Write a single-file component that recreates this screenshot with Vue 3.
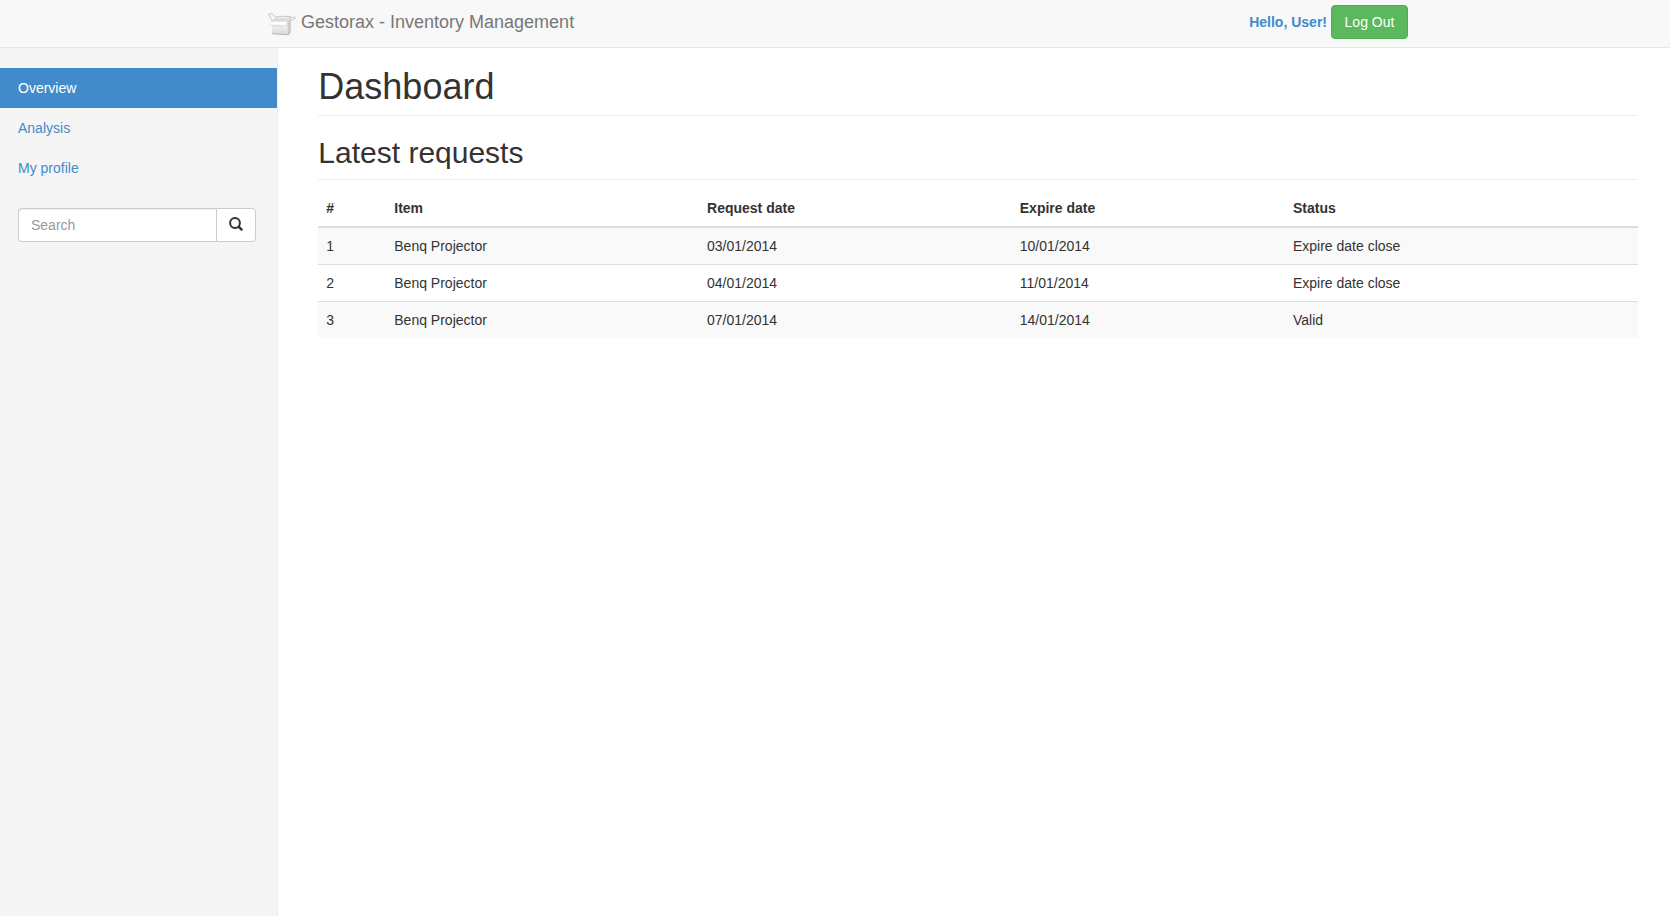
<script setup>
import { ref } from 'vue'

const query = ref('')
const links = [
  { label: 'Overview', active: true },
  { label: 'Analysis', active: false },
  { label: 'My profile', active: false },
]
const requests = [
  { id: 1, item: 'Benq Projector', requested: '03/01/2014', expires: '10/01/2014', status: 'Expire date close' },
  { id: 2, item: 'Benq Projector', requested: '04/01/2014', expires: '11/01/2014', status: 'Expire date close' },
  { id: 3, item: 'Benq Projector', requested: '07/01/2014', expires: '14/01/2014', status: 'Valid' },
]
</script>

<template>
  <div class="page">
    <header class="navbar">
      <div class="navbar-inner">
        <a class="brand" href="#">
          <svg class="logo" viewBox="0 0 28 23" width="28" height="23" aria-hidden="true">
            <defs>
              <linearGradient id="box-front" x1="0" y1="0" x2="0" y2="1">
                <stop offset="0" stop-color="#cfcfcf" />
                <stop offset="0.45" stop-color="#ececec" />
                <stop offset="1" stop-color="#d6d6d6" />
              </linearGradient>
            </defs>
            <path d="M8 4 L12 3.2 L22.6 3.6 L23 7 L19 9 L4 8.5 Z" fill="#ececec" stroke="#c0c0c0" stroke-width="0.8" />
            <path d="M9 5.6 L21.4 5.4 L19.4 8.2 L6.5 8 Z" fill="#dadada" />
            <path d="M0.6 1 L4.4 0.6 L8.2 4.8 L4.2 8 Z" fill="#f6f6f6" stroke="#bdbdbd" stroke-width="0.8" />
            <path d="M19.2 8.5 L23 6.4 L22.8 18.4 L20.6 21.6 L19.4 21.6 Z" fill="#cccccc" />
            <path d="M4 9 L19.4 9 L19.8 21.6 L3.8 20.6 Z" fill="url(#box-front)" />
            <path d="M3.8 20.7 L20.4 21.8 L22.8 18.6" fill="none" stroke="#adadad" stroke-width="0.9" />
            <path d="M3.6 8.3 L19.6 8.4 L18.4 12.4 L1.4 11.8 Z" fill="#ffffff" stroke="#d6d6d6" stroke-width="0.5" />
            <path d="M21.6 5.4 L26.8 3.9 L27.4 5.6 L23.2 7.4 Z" fill="#f8f8f8" stroke="#bdbdbd" stroke-width="0.8" />
          </svg>
          <span>Gestorax - Inventory Management</span>
        </a>
        <div class="account">
          <a class="hello" href="#">Hello, User!</a>
          <button class="logout" type="button">Log Out</button>
        </div>
      </div>
    </header>

    <div class="body">
      <aside class="sidebar">
        <nav class="menu">
          <a v-for="link in links" :key="link.label" href="#" :class="{ active: link.active }">{{ link.label }}</a>
        </nav>
        <form class="search" @submit.prevent>
          <input v-model="query" type="text" placeholder="Search" aria-label="Search" />
          <button type="submit" aria-label="Submit search">
            <svg viewBox="0 0 14 14" width="14" height="14" aria-hidden="true">
              <circle cx="6" cy="6" r="4.9" fill="none" stroke="#333" stroke-width="2" />
              <path d="M9.4 9.4 L13.2 13.2" fill="none" stroke="#333" stroke-width="2.6" />
            </svg>
          </button>
        </form>
      </aside>

      <main class="main">
        <h1>Dashboard</h1>
        <h2>Latest requests</h2>
        <table>
          <colgroup>
            <col class="col-id" />
            <col class="col-item" />
            <col class="col-requested" />
            <col class="col-expires" />
            <col />
          </colgroup>
          <thead>
            <tr>
              <th scope="col">#</th>
              <th scope="col">Item</th>
              <th scope="col">Request date</th>
              <th scope="col">Expire date</th>
              <th scope="col">Status</th>
            </tr>
          </thead>
          <tbody>
            <tr v-for="row in requests" :key="row.id">
              <td>{{ row.id }}</td>
              <td>{{ row.item }}</td>
              <td>{{ row.requested }}</td>
              <td>{{ row.expires }}</td>
              <td>{{ row.status }}</td>
            </tr>
          </tbody>
        </table>
      </main>
    </div>
  </div>
</template>

<style>
body {
  margin: 0;
  background: #fff;
}
</style>

<style scoped>
.page,
.page * {
  box-sizing: border-box;
}
.page {
  display: flex;
  flex-direction: column;
  min-height: 100vh;
  font-family: "Liberation Sans", Arial, Helvetica, sans-serif;
  font-size: 14px;
  line-height: 20px;
  color: #333;
}
a {
  color: #428bca;
  text-decoration: none;
}
.navbar {
  background: #f8f8f8;
  border-bottom: 1px solid #e7e7e7;
}
.navbar-inner {
  display: flex;
  align-items: flex-start;
  justify-content: space-between;
  max-width: 1170px;
  margin: 0 auto;
  padding: 5px 12px 8px 18px;
}
.brand {
  display: flex;
  align-items: center;
  gap: 5px;
  height: 34px;
  color: #777;
  font-size: 18px;
}
.logo {
  margin-top: 4px;
}
.account {
  display: flex;
  align-items: center;
  gap: 4px;
}
.hello {
  font-weight: bold;
}
.logout {
  min-width: 77px;
  height: 34px;
  padding: 0 12px;
  border: 1px solid #4cae4c;
  border-radius: 4px;
  background: #5cb85c;
  color: #fff;
  font: inherit;
}
.body {
  display: flex;
  flex: 1;
}
.sidebar {
  flex: none;
  width: 16.6667%;
  padding-top: 20px;
  background: #f5f5f5;
  border-right: 1px solid #eee;
}
.menu {
  display: flex;
  flex-direction: column;
}
.menu a {
  padding: 10px 18px;
}
.menu .active {
  background: #428bca;
  color: #fff;
}
.search {
  display: flex;
  margin: 20px 21px 0 18px;
}
.search input {
  flex: 1;
  min-width: 0;
  height: 34px;
  padding: 6px 12px;
  border: 1px solid #ccc;
  border-right: 0;
  border-radius: 4px 0 0 4px;
  background: #fff;
  box-shadow: inset 0 1px 1px rgba(0, 0, 0, 0.075);
  color: #555;
  font: inherit;
}
.search input::placeholder {
  color: #999;
  opacity: 1;
}
.search button {
  display: flex;
  flex: none;
  align-items: center;
  justify-content: center;
  width: 40px;
  height: 34px;
  padding: 0 0 2px;
  border: 1px solid #ccc;
  border-radius: 0 4px 4px 0;
  background: #fff;
}
.main {
  flex: 1;
  min-width: 0;
  padding: 19px 32px 20px 40px;
}
h1,
h2 {
  margin: 0;
  border-bottom: 1px solid #eee;
  font-weight: normal;
}
h1 {
  margin-bottom: 20px;
  padding-bottom: 8px;
  font-size: 36px;
  line-height: 40px;
}
h2 {
  margin-bottom: 10px;
  padding-bottom: 9px;
  font-size: 30px;
  line-height: 34px;
}
table {
  width: 100%;
  table-layout: fixed;
  border-collapse: separate;
  border-spacing: 0;
}
.col-id {
  width: 5.15%;
}
.col-item,
.col-requested {
  width: 23.7%;
}
.col-expires {
  width: 20.7%;
}
th,
td {
  padding: 8px;
  text-align: left;
}
th {
  border-bottom: 2px solid #ddd;
}
tbody tr:nth-child(odd) {
  background: #f9f9f9;
}
tbody tr + tr td {
  border-top: 1px solid #ddd;
}
</style>
